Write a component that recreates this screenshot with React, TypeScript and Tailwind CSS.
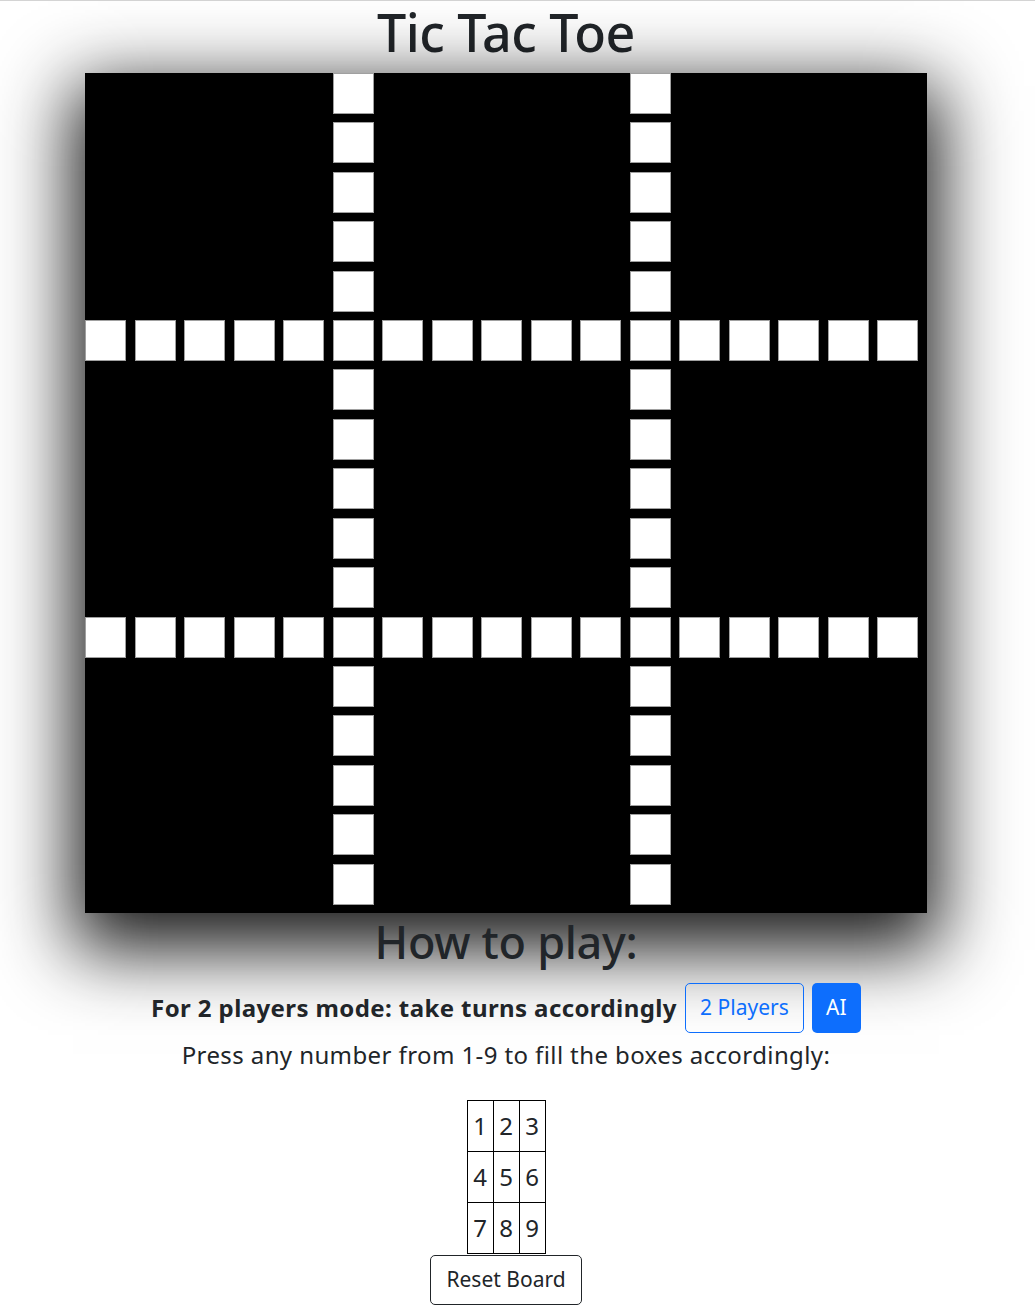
import React from 'react'

const N = 17
const LINES = [5, 11]

function Board() {
  const cells = []
  for (let r = 0; r < N; r++) {
    for (let c = 0; c < N; c++) {
      const on = LINES.includes(r) || LINES.includes(c)
      cells.push(
        <div key={`${r}-${c}`} className="relative">
          {on && <div className="w-[41px] h-[41px] bg-white border border-[#a0a0a0]" />}
        </div>
      )
    }
  }
  return (
    <div className="w-[842px] h-[840px] bg-black grid grid-cols-[repeat(17,1fr)] grid-rows-[repeat(17,1fr)] shadow-[0_25px_70px_12px_rgba(0,0,0,0.9)]">
      {cells}
    </div>
  )
}

export default function App() {
  const keys = [[1, 2, 3], [4, 5, 6], [7, 8, 9]]
  return (
    <div className="min-h-screen bg-white border-t border-[#d4d4d4] text-[#212529]" style={{ fontFamily: '"Noto Sans", "Open Sans", sans-serif' }}>
      <div className="w-[1012px] flex flex-col items-center">
        <h1 className="text-[52px] leading-[62px] h-[72px] font-medium tracking-[-0.5px]">Tic Tac Toe</h1>
        <Board />
        <h2 className="text-[45px] leading-[54px] mt-[2px] font-medium tracking-[-0.3px]">How to play:</h2>
        <div className="flex items-center gap-[8px] mt-[14px]">
          <span className="text-[24px] font-bold tracking-[0.4px]">For 2 players mode: take turns accordingly</span>
          <button className="h-[50px] w-[119px] text-[21px] border border-[#0d6efd] text-[#0d6efd] rounded-[5px]">2 Players</button>
          <button className="h-[50px] w-[49px] text-[21px] bg-[#0d6efd] text-white rounded-[5px]">AI</button>
        </div>
        <p className="text-[24px] leading-[36px] mt-[4px] tracking-[0.4px]">Press any number from 1-9 to fill the boxes accordingly:</p>
        <table className="border-collapse mt-[27px]">
          <tbody>
            {keys.map((row, i) => (
              <tr key={i}>
                {row.map(k => (
                  <td key={k} className="border border-black w-[26px] h-[51px] text-center text-[24px] p-0">{k}</td>
                ))}
              </tr>
            ))}
          </tbody>
        </table>
        <button className="h-[50px] w-[152px] mt-[1px] text-[21px] border border-[#212529] rounded-[5px]">Reset Board</button>
      </div>
    </div>
  )
}
